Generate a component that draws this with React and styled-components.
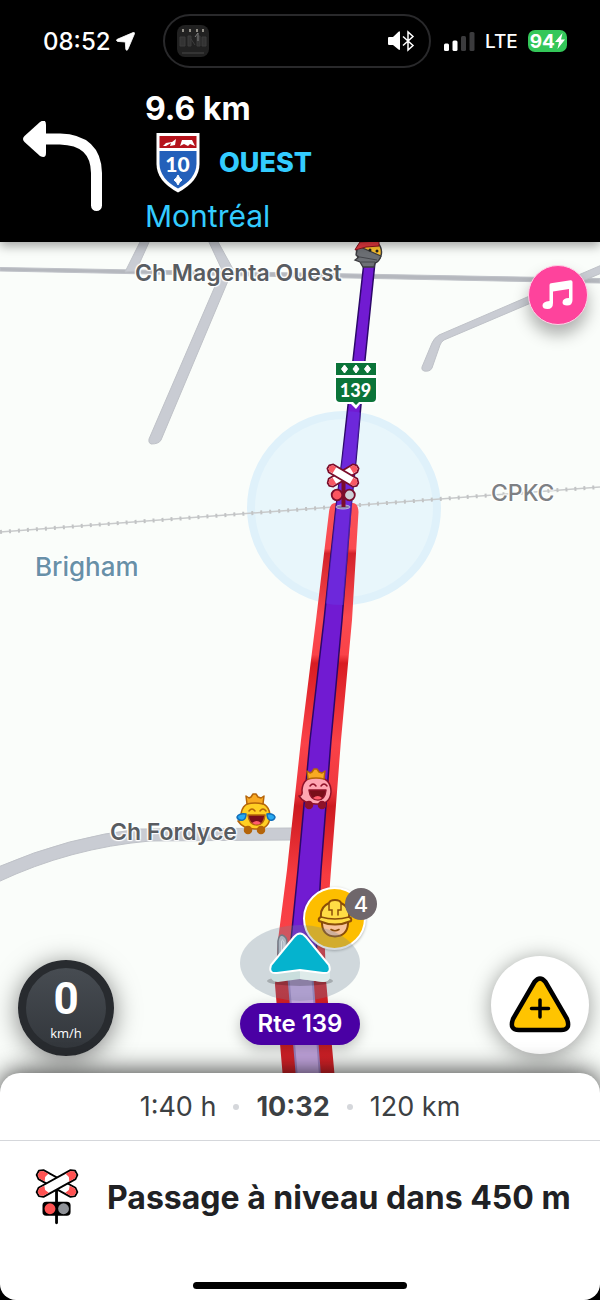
import styled, { createGlobalStyle } from "styled-components"

const GlobalStyle = createGlobalStyle`
    * {
        box-sizing: border-box;
    }
    body {
        margin: 0;
        background: #000;
        font-family: Inter, "Liberation Sans", sans-serif;
    }
    button {
        border: 0;
        padding: 0;
        font: inherit;
        cursor: pointer;
    }
    svg {
        display: block;
    }
`

const Screen = styled.div`
    display: flex;
    flex-direction: column;
    min-height: 100vh;
    background: #000;
`

const Header = styled.header`
    position: relative;
    z-index: 1;
    padding-top: 14px;
    background: #000;
    color: #fff;
    box-shadow: 0 4px 10px rgba(0, 0, 0, 0.35);
`

const StatusBar = styled.div`
    display: flex;
    align-items: center;
    padding-left: 43px;
`

const Clock = styled.div`
    display: flex;
    align-items: center;
    gap: 5px;
    width: 120px;
    font-size: 24px;
    font-weight: 500;
`

const Island = styled.div`
    flex: 1;
    display: flex;
    align-items: center;
    justify-content: space-between;
    height: 54px;
    padding: 0 14px 0 12px;
    border: 2px solid #29292b;
    border-radius: 27px;
`

const Indicators = styled.div`
    display: flex;
    align-items: center;
    gap: 10px;
    width: 169px;
    padding-left: 13px;
    font-size: 19px;
    font-weight: 500;
`

const Battery = styled.div`
    display: flex;
    align-items: center;
    justify-content: center;
    width: 39px;
    height: 22px;
    border-radius: 7px;
    background: #34c759;
    font-size: 19px;
    font-weight: 700;
`

const Direction = styled.div`
    display: flex;
    padding: 21px 24px 5px 22px;
`

const TurnIcon = styled.svg`
    flex: none;
    width: 82px;
    height: 92px;
    margin: 32px 41px 0 0;
`

const Distance = styled.div`
    font-size: 32px;
    line-height: 40px;
    font-weight: 700;
`

const Highway = styled.div`
    display: flex;
    align-items: center;
    gap: 19px;
    height: 66px;
    padding-left: 11px;
    color: #33ccff;
    font-size: 27px;
    font-weight: 800;
`

const City = styled.div`
    color: #33ccff;
    font-size: 30px;
    line-height: 42px;
    font-weight: 400;
`

const Map = styled.main`
    position: relative;
    flex: 1;
    min-height: 858px;
    overflow: hidden;
    background: #fafdfa;
`

const MapCanvas = styled.svg`
    width: 100%;
    height: 858px;
`

const MapLabel = styled.span`
    position: absolute;
    left: ${({x}) => x}px;
    top: ${({y}) => y}px;
    color: ${({color}) => color || "#585c61"};
    font-size: ${({size}) => size || 23}px;
    line-height: 28px;
    font-weight: ${({weight}) => weight || 600};
    white-space: nowrap;
    text-shadow: 0 0 2px #fff, 1px 1px 1px #fff, -1px -1px 1px #fff, 1px -1px 1px #fff, -1px 1px 1px #fff;
`

const RoundButton = styled.button`
    position: absolute;
    display: flex;
    align-items: center;
    justify-content: center;
    width: ${({size}) => size}px;
    height: ${({size}) => size}px;
    border-radius: 50%;
`

const MusicButton = styled(RoundButton)`
    top: 23px;
    right: 12px;
    border: 1px solid #ffd0e6;
    background: #fe439c;
    box-shadow: 0 10px 16px rgba(0, 0, 0, 0.3);
`

const ReportButton = styled(RoundButton)`
    right: 11px;
    bottom: 46px;
    background: #fff;
    box-shadow: 0 3px 22px rgba(0, 0, 0, 0.4);
`

const HazardPin = styled(RoundButton)`
    left: 303px;
    top: 645px;
    border: 2px solid #fff;
    background: #fdbe00;
    box-shadow: 0 1px 3px rgba(0, 0, 0, 0.3);
`

const Count = styled.span`
    position: absolute;
    top: -1px;
    right: -13px;
    width: 32px;
    border-radius: 16px;
    background: #6f676b;
    color: #fff;
    font-size: 22px;
    line-height: 32px;
    font-weight: 500;
    text-align: center;
`

const Vehicle = styled.svg`
    position: absolute;
    left: 240px;
    top: 681px;
`

const StreetPill = styled.div`
    position: absolute;
    left: 50%;
    bottom: 55px;
    transform: translateX(-50%);
    width: 120px;
    border-radius: 21px;
    background: #4a00a4;
    color: #fff;
    font-size: 24px;
    line-height: 42px;
    font-weight: 600;
    text-align: center;
    white-space: nowrap;
    box-shadow: 0 4px 14px rgba(0, 0, 0, 0.25);
`

const Speedometer = styled.div`
    position: absolute;
    left: 18px;
    bottom: 44px;
    display: flex;
    flex-direction: column;
    align-items: center;
    width: 96px;
    height: 96px;
    padding-top: 5px;
    border: 8px solid #282b2f;
    border-radius: 50%;
    background: linear-gradient(#474c52, #33373c);
    color: #fff;
    box-shadow: 0 4px 26px rgba(0, 0, 0, 0.5);
`

const Speed = styled.strong`
    font-family: Roboto, sans-serif;
    font-size: 44px;
    line-height: 52px;
`

const Unit = styled.span`
    font-family: "Open Sans", sans-serif;
    font-size: 13px;
    line-height: 16px;
`

const Sheet = styled.section`
    position: relative;
    margin-top: -27px;
    padding-bottom: 11px;
    border-radius: 20px 20px 16px 16px;
    background: #fff;
    box-shadow: 0 -2px 24px rgba(0, 0, 0, 0.75);
`

const Eta = styled.div`
    display: flex;
    align-items: center;
    justify-content: center;
    gap: 17px;
    height: 68px;
    border-bottom: 1px solid #d5d7db;
    color: #3c4043;
    font-size: 27px;
`

const Dot = styled.span`
    width: 6px;
    height: 6px;
    border-radius: 50%;
    background: #d5d7db;
`

const Alert = styled.div`
    display: flex;
    align-items: center;
    gap: 28px;
    height: 141px;
    padding: 0 24px 28px 35px;
    color: #202124;
    font-size: 32px;
    font-weight: 700;
    white-space: nowrap;
`

const HomeBar = styled.div`
    width: 214px;
    height: 7px;
    margin: 0 auto;
    border-radius: 4px;
    background: #000;
`

const LocationArrow = () => (
    <svg width="19" height="19" viewBox="0 0 19 19">
        <path d="M17 .6 Q19 0 18.400 2 L11.800 17.500 Q10.800 19.200 9.800 17.500 L9.300 10 L1.500 9.400 Q-.6 8.400 1.200 7.300 Z" fill="#fff" stroke="#fff" strokeWidth=".8" strokeLinejoin="round" />
    </svg>
)

const AlbumArt = () => (
    <svg width="32" height="32" viewBox="0 0 32 32">
        <rect width="32" height="32" rx="8" fill="#212121" />
        <path d="M3 12h5v9H3zM11 11h3v10h-3zM14 14l4 6M20 11h3v10h-3zM25 12h4v9h-4z" fill="#333" stroke="#3d3d3d" />
        <path d="M6 4v3M13 4v3M20 4v3M26 4v3" stroke="#b5b1a6" strokeWidth="1.500" />
        <path d="M18 12l3-4v8" fill="none" stroke="#7c7c7c" />
        <path d="M5 28h22" stroke="#343434" strokeWidth="2" />
    </svg>
)

const AudioOutput = () => (
    <svg width="27" height="22" viewBox="0 0 27 22">
        <path d="M1 7 H5 L10.500 1.800 Q12 .7 12 2.400 V19 Q12 20.800 10.500 19.600 L5 15 H1 Q0 15 0 13.800 V8.200 Q0 7 1 7Z" fill="#fff" />
        <path d="M15 6.500 L25 15.500 L20 20 V2 L25 6.500 L15 15.500" fill="none" stroke="#fff" strokeWidth="1.500" />
    </svg>
)

const Signal = () => (
    <svg width="31" height="19" viewBox="0 0 31 19">
        <rect y="11.500" width="5" height="7.500" rx="1.500" fill="#fff" />
        <rect x="8.500" y="8.500" width="5" height="10.500" rx="1.500" fill="#fff" />
        <rect x="17" y="4" width="5" height="15" rx="1.500" fill="#3b3b3d" />
        <rect x="25.500" width="5" height="19" rx="1.500" fill="#3b3b3d" />
    </svg>
)

const Interstate = () => (
    <svg width="44" height="61" viewBox="0 0 44 61">
        <path d="M.5 1 H43.500 V32 Q43.500 49 22 60.500 Q.5 49 .5 32Z" fill="#fff" />
        <path d="M3.500 4 H40.500 V16 H3.500Z" fill="#b5121b" />
        <path d="M7 14 L10 11 L16 10 L20 7 L19 13 L14 14 L15 11 L10 14Z M24 14 L26 8 H36 L39 14 L34 12 L32 14 L28 12Z" fill="#fff" />
        <path d="M3.500 19 H40.500 V32 Q40 47 22 56.500 Q4 47 3.500 32Z" fill="#2360ba" />
        <text x="21.500" y="40" textAnchor="middle" fill="#fff" fontFamily="Lato, sans-serif" fontSize="21" fontWeight="900">10</text>
        <path d="M22 43 Q23 46 26 48 Q23 50 22 53 Q21 50 18 48 Q21 46 22 43Z" fill="#fff" stroke="#fff" strokeWidth="1" />
    </svg>
)

const MusicNotes = () => (
    <svg width="32" height="30" viewBox="0 0 32 30">
        <path d="M7.500 5 Q7.500 3.500 9 3.200 L28.500 .2 Q30.500 0 30.500 2 V20 Q30.500 25.500 25 25.500 Q20.500 25.500 20.500 22.500 Q20.500 18 27 18 V9 L11 11.500 V23 Q11 29 5.500 29 Q.5 29 .5 25.500 Q.5 21.500 7.500 21Z" fill="#fff" />
    </svg>
)

const WarningPlus = () => (
    <svg width="62" height="58" viewBox="0 0 62 58">
        <path d="M25.500 6 Q31 -1 36.500 6 L58 43 Q62 54 52 54 H10 Q0 54 4 43Z" fill="#ffc400" stroke="#000" strokeWidth="4.500" strokeLinejoin="round" />
        <path d="M31 24 V41 M22.500 32.500 H39.500" stroke="#000" strokeWidth="3.500" strokeLinecap="round" />
    </svg>
)

const HardHat = () => (
    <svg width="36" height="40" viewBox="0 0 36 40">
        <path d="M5 22 V25 Q6 37 18 37.500 Q30 37 31 25 V22Z" fill="#f7c39c" stroke="#8a4d08" strokeWidth="2" />
        <path d="M14 30.500 Q18 33 22 30.500" fill="none" stroke="#8a4d08" strokeWidth="1.600" strokeLinecap="round" />
        <path d="M4 18 Q3 8 12 4 Q13 1 18 1 Q23 1 24 4 Q33 8 32 18 Q35 19 34 22 Q18 29 2 22 Q1 19 4 18Z" fill="#ffdc45" stroke="#8a4d08" strokeWidth="2" strokeLinejoin="round" />
        <path d="M4 18 Q18 22 32 18 M12 5 V11 H15 V16 M24 5 V11 H21 V16" fill="none" stroke="#8a4d08" strokeWidth="1.500" strokeLinecap="round" />
    </svg>
)

const CrossingSign = () => (
    <svg width="44" height="59" viewBox="-1 1 47 60">
        <path d="M22 22 V58" stroke="#000" strokeWidth="3" strokeLinecap="round" />
        {[29, -29].map(angle => (
            <g key={angle} transform={`rotate(${angle} 22.5 16)`}>
                <path d="M3 10.500 H42 L46 13.500 V18.500 L42 21.500 H3 L-1 18.500 V13.500Z" fill="#fff" stroke="#000" strokeWidth="2" strokeLinejoin="round" />
                <path d="M3 11.500 H9.500 L8 16 L10 20.500 H3 L0 18 V14Z M42 11.500 H35.500 L37 16 L35 20.500 H42 L45 18 V14Z" fill="#ff5252" />
            </g>
        ))}
        <rect x="7" y="35.500" width="30" height="15" rx="4" fill="#000" />
        <circle cx="15" cy="43" r="5.800" fill="#ff5252" />
        <circle cx="29.500" cy="43" r="5.800" fill="#8f9298" />
    </svg>
)

const Wazer = ({x, y, body, line, feet, tears}) => (
    <g transform={`translate(${x} ${y})`} stroke={line} strokeWidth="1.500" strokeLinejoin="round">
        <path d="M-14 1 Q-13 -12 1 -12 Q15 -11 15 3 Q14 16 0 15 Q-12 15 -17 7 Q-13 7 -14 1Z" fill={body} />
        <path d="M-8 -10 L-9 -18 L-6 -16 L-4 -17 L-2 -20 L1 -20 L3 -17 L6 -16 L9 -18 L8 -10 Q0 -12 -8 -10Z" fill="#f9aa22" stroke="#b5650a" />
        <path d="M-7 1 H10 Q9 11 2 11 Q-6 11 -7 1Z" fill="#7a0e1a" />
        <path d="M-3 9 Q2 5 6 9 Q2 12 -3 9Z" fill="#ff5d6c" stroke="none" />
        <path d="M-6 -3 Q-3 -7 0 -3 M5 -3 Q8 -7 11 -3" fill="none" strokeLinecap="round" />
        <circle cx="-7" cy="16" r="3.500" fill={feet} />
        <circle cx="6" cy="16" r="3.500" fill={feet} />
        {tears && <path d="M-9 0 Q-16 -1 -18 3 Q-17 7 -12 6 Q-9 5 -9 0Z M12 0 Q18 -1 20 3 Q19 7 15 6 Q12 5 12 0Z" fill="#27a9f0" stroke="#126fba" />}
    </g>
)

const NinjaWazer = () => (
    <g transform="translate(368 252)">
        <circle cx="1" cy="0" r="12.500" fill="#ffc42e" stroke="#3b3b3f" strokeWidth="1.500" />
        <path d="M-10 -6 L13 4 Q11 10 7 11 L6 15 H-5 L-8 10 L-13 8 L-9 5 L-12 3Z" fill="#6d7075" stroke="#3b3b3f" strokeWidth="1.300" />
        <path d="M-8 5 L9 8 M-7 10 H7" stroke="#44464b" />
        <path d="M-12 -4 L-8 -10 L11 -11 L11 -6 L-2 -5 L-13 -2Z" fill="#ee3b42" stroke="#8c1420" />
        <circle cx="2" cy="-2" r="1.500" fill="#222" />
        <circle cx="9" cy="-1" r="1.500" fill="#222" />
    </g>
)

const RouteShield = () => (
    <g>
        <path d="M334 361 H378 V400 Q378 404 374 404 H360 L356 409 L351 404 H338 Q334 404 334 400Z" fill="#fff" />
        <path d="M336 363 H376 V375 H336Z M336 378 H376 V398 Q376 402 372 402 H359 L356 405 L353 402 H340 Q336 402 336 398Z" fill="#0b7439" />
        {[344.5, 356, 367.5].map(x => (
            <path key={x} d={`M${x} 365 L${x + 3} 369 L${x} 373 L${x - 3} 369Z`} fill="#fff" stroke="#fff" strokeLinejoin="round" />
        ))}
        <text x="355.500" y="397" textAnchor="middle" fill="#fff" fontFamily="Lato, sans-serif" fontSize="18" fontWeight="900">139</text>
    </g>
)

const MapCrossing = () => (
    <g stroke="#7a0d2b" strokeWidth="1.800" strokeLinejoin="round">
        <ellipse cx="343" cy="507" rx="7" ry="2" fill="#8580a5" stroke="#b9aede" strokeWidth="1" />
        <path d="M343.500 480 V507" strokeWidth="4" />
        {[-31, 31].map(angle => (
            <g key={angle} transform={`rotate(${angle} 343 475.500)`}>
                <path d="M329 471 H357 L360 474 V477.500 L357 480 H329 L326 477.500 V474Z" fill="#fff" />
                <path d="M329 472 H333 V479 H329 L327 477 V474Z M357 472 H353 V479 H357 L359 477 V474Z" fill="#f75963" stroke="none" />
            </g>
        ))}
        <circle cx="337" cy="495" r="5.300" fill="#fa5560" />
        <circle cx="349.500" cy="495" r="5.300" fill="#ccd0d6" />
    </g>
)

// drawn in screen coordinates, the map starts right under the 242px header
const Roads = () => (
    <MapCanvas viewBox="0 242 600 858" preserveAspectRatio="xMidYMin slice" role="img" aria-label="Carte">
        <defs>
            <linearGradient id="traffic" gradientUnits="userSpaceOnUse" x1="0" y1="503" x2="0" y2="1075">
                <stop offset="0" stopColor="#fa5359" />
                <stop offset="0.080" stopColor="#fa4a50" />
                <stop offset="0.088" stopColor="#d3222b" />
                <stop offset="0.200" stopColor="#fa4a4f" />
                <stop offset="0.265" stopColor="#fa4248" />
                <stop offset="0.280" stopColor="#d91c22" />
                <stop offset="0.420" stopColor="#fa4248" />
                <stop offset="0.500" stopColor="#f03940" />
                <stop offset="0.530" stopColor="#cd1a20" />
                <stop offset="0.650" stopColor="#f63b40" />
                <stop offset="0.760" stopColor="#fa4248" />
                <stop offset="0.800" stopColor="#cf1e26" />
                <stop offset="1" stopColor="#dc2329" />
            </linearGradient>
            <clipPath id="zone">
                <circle cx="343" cy="508" r="97" />
            </clipPath>
        </defs>
        <g fill="#c9ccd3" stroke="#bfc2c8">
            <path d="M0 267.500 L600 278.500 V283 L0 271Z" fill="#b5b8be" />
            <path d="M141 240 H150 L136 271 L125 272Z" />
            <path d="M208 240 H217 L233 269 L161 440 Q159 444 151 444 Q148 443 149 439 L222 270Z" />
            <path d="M604 264 V272 L444 340 Q441 342 440 345 L432 368 Q430 372 424 371 Q421 370 422 367 L432 343 Q434 338 439 335Z" />
            <path d="M-2 867 Q70 836 140 829 L292 828 V840 L150 841 Q70 848 -2 882Z" />
        </g>
        <circle cx="344" cy="508" r="93" fill="#e8f6fb" stroke="#dff1fa" strokeWidth="8" />
        <path d="M0 532 L600 487" stroke="#c8cacb" strokeWidth="1.500" />
        <path d="M0 532 L600 487" stroke="#c2c4c5" strokeWidth="4" strokeDasharray="2 7" />
        <path d="M329 512 Q330 503 335 503 H353 Q358 503 358.500 512 L352 620 L341 740 L331 870 L325 950 L326 980 L337 1102 H285 L275 985 L278 940 L287 870 L301 740 L316 620Z" fill="url(#traffic)" />
        <path d="M364 262 H375 L365 360 L356 460 L351 507 L342 620 L331 740 L321 870 L315 975 H289 L291 940 L298 870 L310 740 L324 620 L336 507 L342 460 L353 360Z" fill="#711bd2" stroke="#2c0869" strokeWidth="1.500" />
        <path d="M288 972 L312 972 L322 1102 H299Z" fill="#c9abe6" stroke="#a287c7" strokeWidth="2" />
        <g clipPath="url(#zone)">
            <path d="M342 460 L350 400 H362 L356 460 L342 620 H324 L336 507Z" fill="#6a35e4" opacity="0.500" />
        </g>
        <path d="M278 960 V941 Q279 935 282 935 Q287 937 287 942 V958" fill="#c7cbd1" stroke="#71767d" strokeWidth="1.500" />
        <path d="M281.500 955 V942 Q282 938 284 942 V955" fill="none" stroke="#fff" strokeWidth="1" />
        <NinjaWazer />
        <RouteShield />
        <MapCrossing />
        <Wazer x={255} y={814} body="#ffcf23" line="#b5650a" feet="#b5650a" tears />
        <Wazer x={316} y={789} body="#ffa5b2" line="#8f1229" feet="#8f1229" />
    </MapCanvas>
)

const VehicleArrow = () => (
    <Vehicle width="120" height="86" viewBox="0 0 120 86" aria-hidden="true">
        <ellipse cx="60" cy="40" rx="60" ry="38" fill="#6f8498" opacity="0.300" />
        <ellipse cx="60" cy="58" rx="33" ry="5" fill="#000" opacity="0.200" />
        <path d="M30 48 L31 55 Q33 59 38 59 L60 56 L83 59 Q88 59 90 55 V47Z" fill="#c9dedd" />
        <path d="M60 48 V56 L83 59 Q88 59 90 55 V47Z" fill="#deebea" />
        <path d="M54 14 Q60 7 66 14 L89 42 Q92 51 83 50 L60 47 L37 50 Q28 51 31 42Z" fill="#05b3ce" stroke="#fff" strokeWidth="2" />
    </Vehicle>
)

export default function App() {
    return (
        <>
            <GlobalStyle />
            <Screen>
                <Header>
                    <StatusBar>
                        <Clock>08:52 <LocationArrow /></Clock>
                        <Island>
                            <AlbumArt />
                            <AudioOutput />
                        </Island>
                        <Indicators>
                            <Signal />
                            <span>LTE</span>
                            <Battery>
                                94
                                <svg width="10" height="16" viewBox="0 0 10 16">
                                    <path d="M7.500 0 L0 9 H4 L2.500 16 L10 6.500 H6Z" fill="#fff" />
                                </svg>
                            </Battery>
                        </Indicators>
                    </StatusBar>
                    <Direction>
                        <TurnIcon viewBox="0 0 82 92">
                            <path d="M74.500 84.500 V52 Q74 19 38 18 H22" fill="none" stroke="#fff" strokeWidth="11" strokeLinecap="round" />
                            <path d="M2.500 15 L18 1 Q24 -3 24 4 V32 Q24 38 18 35 L2.500 21 Q-.5 18 2.500 15Z" fill="#fff" />
                        </TurnIcon>
                        <div>
                            <Distance>9.6 km</Distance>
                            <Highway><Interstate /> OUEST</Highway>
                            <City>Montréal</City>
                        </div>
                    </Direction>
                </Header>
                <Map>
                    <Roads />
                    <MapLabel x={135} y={17}>Ch Magenta Ouest</MapLabel>
                    <MapLabel x={491} y={237} color="#7d8084" weight={500}>CPKC</MapLabel>
                    <MapLabel x={35} y={311} size={26} color="#6890a8" weight={500}>Brigham</MapLabel>
                    <MapLabel x={110} y={576}>Ch Fordyce</MapLabel>
                    <HazardPin type="button" size={63} aria-label="Travaux">
                        <HardHat />
                        <Count>4</Count>
                    </HazardPin>
                    <VehicleArrow />
                    <StreetPill>Rte 139</StreetPill>
                    <MusicButton type="button" size={60} aria-label="Musique"><MusicNotes /></MusicButton>
                    <Speedometer>
                        <Speed>0</Speed>
                        <Unit>km/h</Unit>
                    </Speedometer>
                    <ReportButton type="button" size={98} aria-label="Signaler"><WarningPlus /></ReportButton>
                </Map>
                <Sheet>
                    <Eta>
                        <span>1:40 h</span>
                        <Dot />
                        <strong>10:32</strong>
                        <Dot />
                        <span>120 km</span>
                    </Eta>
                    <Alert>
                        <CrossingSign />
                        Passage à niveau dans 450 m
                    </Alert>
                    <HomeBar />
                </Sheet>
            </Screen>
        </>
    )
}
